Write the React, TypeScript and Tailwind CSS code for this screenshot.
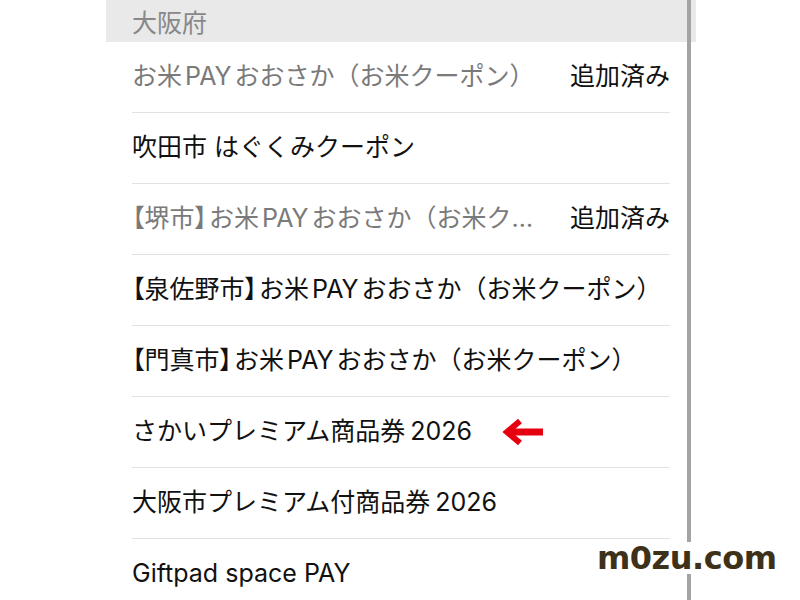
import React from "react";

const Lat = ({ children }: { children: React.ReactNode }) => (
  <span className="mx-[3px]">{children}</span>
);

const Br = ({ children }: { children: React.ReactNode }) => (
  <span className="mr-[2px]" style={{ fontFeatureSettings: '"palt"' }}>
    {children}
  </span>
);

const kome = (
  <>
    お米<Lat>PAY</Lat>おおさか（お米クーポン）
  </>
);

type Row = { node: React.ReactNode; added?: "wide" | "narrow"; arrow?: boolean };

const rows: Row[] = [
  { node: kome, added: "narrow" },
  { node: <>吹田市 はぐくみクーポン</> },
  {
    node: (
      <>
        <Br>【堺市】</Br>
        {kome}
      </>
    ),
    added: "wide",
  },
  {
    node: (
      <>
        <Br>【泉佐野市】</Br>
        {kome}
      </>
    ),
  },
  {
    node: (
      <>
        <Br>【門真市】</Br>
        {kome}
      </>
    ),
  },
  {
    node: (
      <>
        さかいプレミアム商品券<span className="ml-[5px]">2026</span>
      </>
    ),
    arrow: true,
  },
  {
    node: (
      <>
        大阪市プレミアム付商品券<span className="ml-[5px]">2026</span>
      </>
    ),
  },
  { node: <>Giftpad space PAY</> },
];

function Arrow() {
  return (
    <svg width="42" height="30" viewBox="0 0 42 30" className="ml-[30px] shrink-0">
      <path d="M18 4 L5 15 L18 26" fill="none" stroke="#e6000f" strokeWidth="6" strokeLinejoin="miter" />
      <path d="M6 15 L41 15" fill="none" stroke="#e6000f" strokeWidth="7" />
    </svg>
  );
}

export default function App() {
  return (
    <div
      className="relative w-[800px] h-[600px] overflow-hidden bg-white flex"
      style={{ fontFamily: 'Inter, "Noto Sans CJK JP", sans-serif' }}
    >
      <div className="w-[106px] shrink-0" />
      <div className="w-[581px] shrink-0 flex flex-col">
        <div className="h-[42px] shrink-0 bg-[#e9e9e9] flex items-center pl-[26px] pt-[5px] text-[25px] text-[#888888]">
          大阪府
        </div>
        <div className="pl-[26px] pr-[17px] flex flex-col">
          {rows.map((r, i) => (
            <div
              key={i}
              className="h-[71px] shrink-0 border-b border-[#e2e2e2] flex items-center text-[25px]"
            >
              <div
                className={
                  "min-w-0 truncate " + (r.added ? "text-[#7a7a7a] flex-1" : "text-[#111111]")
                }
              >
                {r.node}
              </div>
              {r.arrow && <Arrow />}
              {r.added && (
                <div
                  className={
                    "shrink-0 text-[#111111] " + (r.added === "wide" ? "ml-[36px]" : "ml-[4px]")
                  }
                >
                  追加済み
                </div>
              )}
            </div>
          ))}
        </div>
      </div>
      <div className="w-[4px] shrink-0 bg-[#a4a4a4]" />
      <div className="flex-1 flex flex-col">
        <div className="h-[42px] w-[5px] bg-[#e9e9e9]" />
      </div>
      <div
        className="absolute left-[597px] top-[542px] bg-white leading-none text-[32px] font-bold tracking-[-0.5px] text-[#3d3119]"
        style={{ fontFamily: '"DejaVu Sans", sans-serif' }}
      >
        m0zu.com
      </div>
    </div>
  );
}
